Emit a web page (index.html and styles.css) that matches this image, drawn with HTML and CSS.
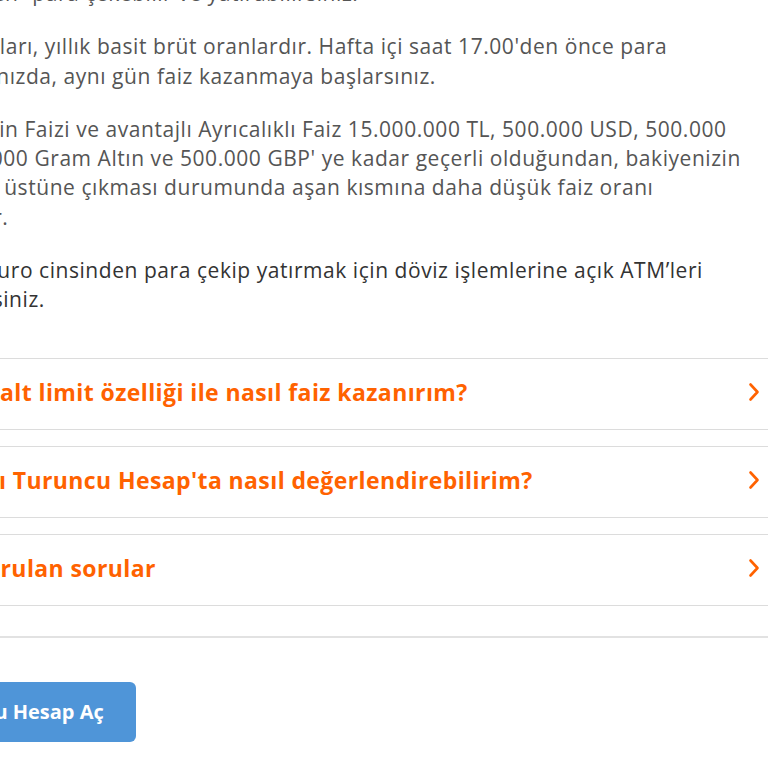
FILE: index.html
```html
<!DOCTYPE html>
<html lang="tr">
<head>
<meta charset="utf-8">
<title>Turuncu Hesap</title>
<link rel="stylesheet" href="styles.css">
</head>
<body>
<main class="page">
  <div class="content">
    <p class="txt">“Cebimden” para çekebilir ve yatırabilirsiniz.</p>
    <p class="txt">Faiz oranları, yıllık basit brüt oranlardır. Hafta içi saat 17.00'den önce para<br>aktardığınızda, aynı gün faiz kazanmaya başlarsınız.</p>
    <p class="txt">Hoş Geldin Faizi ve avantajlı Ayrıcalıklı Faiz 15.000.000 TL, 500.000 USD, 500.000<br>EUR, 10.000 Gram Altın ve 500.000 GBP' ye kadar geçerli olduğundan, bakiyenizin<br>limitlerin üstüne çıkması durumunda aşan kısmına daha düşük faiz oranı<br>uygulanır.</p>
    <p class="txt dark">USD ve Euro cinsinden para çekip yatırmak için döviz işlemlerine açık ATM’leri<br>görebilirsiniz.</p>

    <div class="acc">
      <a class="acc-item" href="#"><span class="acc-title">Tutarın alt limit özelliği ile nasıl faiz kazanırım?</span><svg class="chev" viewBox="0 0 12 20" width="12" height="20"><path d="M2.5 2.5 L9.5 10 L2.5 17.5"/></svg></a>
      <a class="acc-item" href="#"><span class="acc-title">Maaşımı Turuncu Hesap'ta nasıl değerlendirebilirim?</span><svg class="chev" viewBox="0 0 12 20" width="12" height="20"><path d="M2.5 2.5 L9.5 10 L2.5 17.5"/></svg></a>
      <a class="acc-item" href="#"><span class="acc-title">Sıkça sorulan sorular</span><svg class="chev" viewBox="0 0 12 20" width="12" height="20"><path d="M2.5 2.5 L9.5 10 L2.5 17.5"/></svg></a>
    </div>

    <div class="divider"></div>

    <a class="btn" href="#">Turuncu Hesap Aç</a>
  </div>
</main>
</body>
</html>
```
FILE: styles.css
```css
html, body {
  margin: 0;
  padding: 0;
  background: #fff;
}
.page {
  width: 768px;
  height: 768px;
  overflow: hidden;
  font-family: "Open Sans", Lato, sans-serif;
}
.content {
  margin: -21px 0 0 -94px;
  width: 882px;
  display: flex;
  flex-direction: column;
  align-items: flex-start;
}
.txt {
  margin: 0 0 24px 0;
  font-size: 21px;
  line-height: 29.3px;
  letter-spacing: 0.55px;
  color: #555;
  white-space: nowrap;
}
.txt.dark {
  color: #333;
  margin-bottom: 0;
}
.acc {
  margin-top: 43px;
  width: 100%;
  display: flex;
  flex-direction: column;
  gap: 16px;
}
.acc-item {
  box-sizing: border-box;
  height: 72px;
  border-top: 1px solid #dcdcdc;
  border-bottom: 1px solid #dcdcdc;
  display: flex;
  align-items: center;
  justify-content: space-between;
  padding: 0 28px 3px 0;
  text-decoration: none;
}
.acc-title {
  color: #ff6200;
  font-weight: 700;
  font-size: 23px;
  letter-spacing: 0.4px;
  white-space: nowrap;
}
.chev {
  flex: none;
  fill: none;
  stroke: #ff6200;
  stroke-width: 2.6;
  stroke-linecap: round;
  stroke-linejoin: round;
}
.divider {
  width: 100%;
  height: 2px;
  margin-top: 30px;
  background: #e2e2e2;
}
.btn {
  margin: 44px 0 0 -14px;
  height: 60px;
  box-sizing: border-box;
  padding: 0 32px;
  display: flex;
  align-items: center;
  background: #4f95d8;
  border-radius: 6px;
  color: #fff;
  font-weight: 700;
  font-size: 20px;
  text-decoration: none;
}
```
